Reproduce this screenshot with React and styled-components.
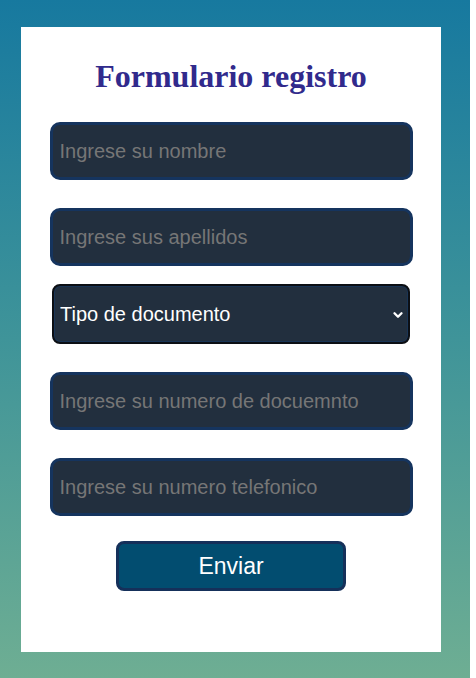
import styled, { createGlobalStyle } from "styled-components";
import { ChevronDown } from "lucide-react";

const GlobalStyle = createGlobalStyle`
  body {
    margin: 0;
    background: #ffffff;
    font-family: "Liberation Sans", Arial, sans-serif;
  }
`;

const App = () => {
  return (
    <>
      <GlobalStyle />
      <Page>
        <Card>
          <Title>Formulario registro</Title>
          <Form onSubmit={(e) => e.preventDefault()}>
            <Input type="text" placeholder="Ingrese su nombre" />
            <Input type="text" placeholder="Ingrese sus apellidos" />
            <SelectWrap>
              <Select defaultValue="">
                <option value="">Tipo de documento</option>
                <option value="cc">Cédula de ciudadanía</option>
                <option value="ti">Tarjeta de identidad</option>
              </Select>
              <Arrow size={14} strokeWidth={4} />
            </SelectWrap>
            <Input type="text" placeholder="Ingrese su numero de docuemnto" />
            <Input type="text" placeholder="Ingrese su numero telefonico" />
            <Button type="submit">Enviar</Button>
          </Form>
        </Card>
      </Page>
    </>
  );
};

const Page = styled.div`
  width: 470px;
  min-height: 678px;
  padding: 27px 0 26px 21px;
  box-sizing: border-box;
  background: linear-gradient(180deg, #17799f 0%, #3f9499 50%, #6eae93 100%);
`;

const Card = styled.div`
  width: 420px;
  height: 625px;
  background: #ffffff;
  padding-top: 31px;
  box-sizing: border-box;
`;

const Title = styled.h1`
  margin: 0 0 27px;
  text-align: center;
  font-family: "Liberation Serif", "Times New Roman", serif;
  font-size: 32px;
  font-weight: bold;
  color: #312a8c;
`;

const Form = styled.form`
  display: flex;
  flex-direction: column;
  align-items: center;
`;

const Input = styled.input`
  width: 363px;
  height: 58px;
  box-sizing: border-box;
  margin-bottom: 28px;
  padding: 0 7px;
  border: 3px solid #15345e;
  border-radius: 10px;
  background: #222f3e;
  color: #ffffff;
  font-family: "Liberation Sans", Arial, sans-serif;
  font-size: 20px;
  outline: none;

  &::placeholder {
    color: #767676;
  }

  &:nth-of-type(2) {
    margin-bottom: 18px;
  }
`;

const SelectWrap = styled.div`
  position: relative;
  width: 358px;
  height: 60px;
  margin-bottom: 28px;
`;

const Select = styled.select`
  width: 100%;
  height: 100%;
  box-sizing: border-box;
  padding: 0 6px;
  appearance: none;
  border: 2px solid #0c0f14;
  box-shadow: inset 0 0 0 1px #1a3556;
  border-radius: 8px;
  background: #222f3e;
  color: #ffffff;
  font-family: "Liberation Sans", Arial, sans-serif;
  font-size: 20px;
  outline: none;
`;

const Arrow = styled(ChevronDown)`
  position: absolute;
  right: 5px;
  top: 24px;
  color: #ffffff;
  pointer-events: none;
`;

const Button = styled.button`
  width: 230px;
  height: 50px;
  margin-top: -3px;
  border: 3px solid #15305a;
  border-radius: 8px;
  background: #024d70;
  color: #ffffff;
  font-family: "Liberation Sans", Arial, sans-serif;
  font-size: 23px;
  cursor: pointer;
`;

export default App;
